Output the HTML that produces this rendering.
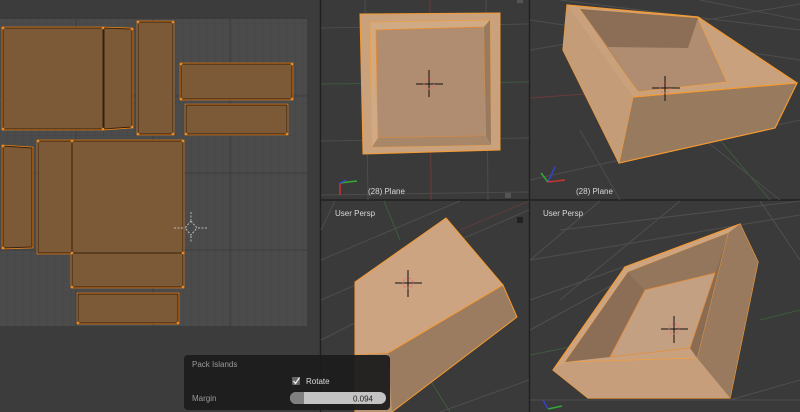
<!DOCTYPE html>
<html><head><style>
html,body{margin:0;padding:0;background:#3a3a3a;}
svg{display:block}
text{font-family:"Liberation Sans",sans-serif;}
</style></head><body>
<svg width="800" height="412" viewBox="0 0 800 412" xmlns="http://www.w3.org/2000/svg">
<defs>
<pattern id="g" width="8" height="8" patternUnits="userSpaceOnUse"><rect width="8" height="8" fill="#4b4b4b"/><path d="M8 0V8H0" fill="none" stroke="#434343" stroke-width="0.6"/></pattern>
<g id="isl">
<rect x="3" y="28" width="100" height="101"/>
<polygon points="104,28 132,29 132,127 104,129"/>
<rect x="138" y="22" width="35" height="112"/>
<rect x="181" y="64" width="111" height="35"/>
<polygon points="186,105 287,105 287,134 186,134"/>
<polygon points="3,146 32,148 32,247 3,248"/>
<rect x="38" y="141" width="34" height="112"/>
<rect x="72" y="141" width="111" height="112"/>
<rect x="72" y="253" width="111" height="34"/>
<rect x="78" y="294" width="100" height="29"/>
</g>
</defs>
<rect x="0" y="0" width="320" height="412" fill="#3c3c3c"/>
<rect x="0" y="19" width="307" height="307" fill="url(#g)"/>
<g stroke="#393939" stroke-width="0.8"><line x1="76" y1="19" x2="76" y2="326"/><line x1="153" y1="19" x2="153" y2="326"/><line x1="230" y1="19" x2="230" y2="326"/><line x1="0" y1="96" x2="307" y2="96"/><line x1="0" y1="173" x2="307" y2="173"/><line x1="0" y1="250" x2="307" y2="250"/></g>
<use href="#isl" fill="none" stroke="#e8851e" stroke-width="2.6"/>
<use href="#isl" fill="#7c5a38" stroke="#3a2008" stroke-width="1"/>
<g fill="#f08a20"><circle cx="3" cy="28" r="1.3"/><circle cx="103" cy="28" r="1.3"/><circle cx="3" cy="129" r="1.3"/><circle cx="103" cy="129" r="1.3"/><circle cx="132" cy="29" r="1.3"/><circle cx="132" cy="127" r="1.3"/><circle cx="138" cy="22" r="1.3"/><circle cx="173" cy="22" r="1.3"/><circle cx="138" cy="134" r="1.3"/><circle cx="173" cy="134" r="1.3"/><circle cx="181" cy="64" r="1.3"/><circle cx="292" cy="64" r="1.3"/><circle cx="181" cy="99" r="1.3"/><circle cx="292" cy="99" r="1.3"/><circle cx="186" cy="134" r="1.3"/><circle cx="287" cy="134" r="1.3"/><circle cx="3" cy="146" r="1.3"/><circle cx="3" cy="248" r="1.3"/><circle cx="38" cy="141" r="1.3"/><circle cx="72" cy="141" r="1.3"/><circle cx="183" cy="141" r="1.3"/><circle cx="183" cy="253" r="1.3"/><circle cx="72" cy="253" r="1.3"/><circle cx="183" cy="287" r="1.3"/><circle cx="72" cy="287" r="1.3"/><circle cx="78" cy="323" r="1.3"/><circle cx="178" cy="323" r="1.3"/></g>
<g stroke="#bbb" stroke-width="1" fill="none" stroke-dasharray="2,1.5"><path d="M191 221L197 228L191 235L185 228Z"/><line x1="174" y1="228" x2="184" y2="228"/><line x1="198" y1="228" x2="208" y2="228"/><line x1="191" y1="212" x2="191" y2="220"/><line x1="191" y1="236" x2="191" y2="243"/></g>
<rect x="321" y="0" width="479" height="412" fill="#3a3a3a"/>
<g stroke="#202020" stroke-width="1.5"><line x1="320.5" y1="0" x2="320.5" y2="412"/><line x1="529.5" y1="0" x2="529.5" y2="412"/><line x1="321" y1="200" x2="800" y2="200"/></g>
<g stroke="#4c4c4c" stroke-width="1"><line x1="365" y1="0" x2="368" y2="200"/><line x1="486" y1="0" x2="488" y2="200"/><line x1="321" y1="28" x2="529" y2="24"/><line x1="321" y1="141" x2="529" y2="138"/><line x1="321" y1="195" x2="529" y2="192"/></g>
<line x1="430" y1="0" x2="431" y2="200" stroke="#6a3a3a"/>
<line x1="321" y1="84" x2="529" y2="82" stroke="#3e5a3e"/>
<polygon points="360,14 500,13 500,150 363,154" fill="#c9a17c" stroke="#f59a30" stroke-width="1"/>
<polygon points="370,22 490,20 491,145 372,147" fill="#d0a985" stroke="#f0a040" stroke-width="0.7"/>
<polygon points="376,30 484,27 486,136 378,138" fill="#b08d70" stroke="#e88a30" stroke-width="0.8"/>
<polygon points="484,27 490,20 491,145 486,136" fill="#987a60"/>
<polygon points="378,138 486,136 491,145 372,147" fill="#a88668"/>
<g stroke="#4d4d4d" stroke-width="1"><line x1="530" y1="20" x2="800" y2="60"/><line x1="560" y1="0" x2="800" y2="30"/><line x1="700" y1="0" x2="800" y2="20"/><line x1="530" y1="180" x2="800" y2="120"/><line x1="780" y1="200" x2="680" y2="120"/><line x1="620" y1="200" x2="580" y2="130"/><line x1="530" y1="50" x2="800" y2="4"/></g>
<line x1="530" y1="98" x2="640" y2="90" stroke="#6a3a3a"/>
<line x1="720" y1="140" x2="770" y2="200" stroke="#3e5a3e"/>
<polygon points="567,5 698,17 797,83 775,128 619,163 563,50" fill="#c9a17c" stroke="#f59a30" stroke-width="1.2"/>
<polygon points="633,97 619,163 775,128 797,83" fill="#987a5e" stroke="#f59a30" stroke-width="1"/>
<polygon points="567,5 563,50 619,163 633,97" fill="#c49c78"/>
<polygon points="580,9 698,18 727,82 638,92" fill="#b08d70" stroke="#f0a040" stroke-width="0.8"/>
<polygon points="580,9 698,18 688,48 608,47" fill="#8c6e56"/>
<polygon points="580,9 608,47 638,92" fill="#a8876a"/>
<line x1="633" y1="97" x2="797" y2="83" stroke="#f59a30"/>
<g stroke="#4d4d4d" stroke-width="1"><line x1="321" y1="260" x2="460" y2="201"/><line x1="321" y1="300" x2="529" y2="210"/><line x1="321" y1="340" x2="420" y2="290"/><line x1="440" y1="412" x2="529" y2="380"/><line x1="335" y1="201" x2="321" y2="230"/></g>
<line x1="460" y1="230" x2="529" y2="201" stroke="#5e3a3a"/>
<line x1="384" y1="201" x2="400" y2="240" stroke="#3e5a3e"/>
<line x1="430" y1="380" x2="450" y2="412" stroke="#3e5a3e"/>
<polygon points="446,218 503,285 388,353 355,355 355,282" fill="#cca482" stroke="#f59a30" stroke-width="1"/>
<polygon points="503,285 517,317 392,412 355,412 355,355 388,353" fill="#9c7c60" stroke="#f59a30" stroke-width="1"/>
<polygon points="355,355 388,353 392,412 355,412" fill="#b89372"/>
<g stroke="#4f4f4f" stroke-width="1"><line x1="530" y1="260" x2="800" y2="215"/><line x1="530" y1="300" x2="700" y2="240"/><line x1="560" y1="230" x2="800" y2="201"/><line x1="530" y1="330" x2="640" y2="270"/><line x1="600" y1="201" x2="530" y2="260"/><line x1="680" y1="201" x2="560" y2="300"/><line x1="760" y1="201" x2="800" y2="260"/><line x1="800" y1="380" x2="730" y2="400"/><line x1="530" y1="400" x2="800" y2="400"/></g>
<line x1="530" y1="355" x2="580" y2="345" stroke="#3e5a3e"/>
<line x1="760" y1="320" x2="800" y2="310" stroke="#3e5a3e"/>
<polygon points="740,224 758,262 730,398 588,398 553,370 625,267" fill="#cca482" stroke="#f59a30" stroke-width="1.2"/>
<polygon points="740,224 758,262 730,398 697,358 728,233" fill="#9a7a5e"/>
<polygon points="553,370 565,362 697,358 730,398 588,398" fill="#c69e7c"/>
<polygon points="628,272 728,233 697,358 565,362" fill="#c9a17f" stroke="#f0a040" stroke-width="0.8"/>
<polygon points="628,272 645,290 610,357 565,362" fill="#8c6e56"/>
<polygon points="628,272 728,233 715,273 645,290" fill="#94765c"/>
<polygon points="728,233 697,358 690,348 715,273" fill="#8a6c54"/>
<polygon points="645,290 715,273 690,348 610,357" fill="#c4a083" stroke="#e88a30" stroke-width="0.7"/>
<g stroke="#111" stroke-width="1"><line x1="429" y1="70" x2="429" y2="97"/><line x1="416" y1="84" x2="443" y2="84"/><line x1="665" y1="76" x2="665" y2="101"/><line x1="652" y1="88" x2="680" y2="88"/><line x1="408" y1="270" x2="408" y2="297"/><line x1="395" y1="283" x2="422" y2="283"/><line x1="674" y1="316" x2="674" y2="343"/><line x1="661" y1="329" x2="688" y2="329"/></g>
<g fill="none" stroke="#e07070" stroke-width="1" stroke-dasharray="2,1.5"><circle cx="429" cy="84" r="5"/><circle cx="665" cy="88" r="5"/><circle cx="408" cy="283" r="5"/><circle cx="674" cy="329" r="5"/></g>
<g stroke-width="1.5"><line x1="340" y1="183" x2="357" y2="181" stroke="#3a3"/><line x1="340" y1="183" x2="340" y2="195" stroke="#c33"/><line x1="340" y1="183" x2="346" y2="180" stroke="#34c"/>
<line x1="548" y1="182" x2="555" y2="167" stroke="#34c"/><line x1="548" y1="182" x2="541" y2="173" stroke="#3a3"/><line x1="548" y1="182" x2="565" y2="180" stroke="#c33"/>
<line x1="548" y1="409" x2="562" y2="406" stroke="#3a3"/><line x1="548" y1="409" x2="543" y2="400" stroke="#34c"/></g>
<g font-size="8" fill="#d8d8d8"><text x="368" y="194">(28) Plane</text><text x="576" y="194">(28) Plane</text><text x="335" y="216">User Persp</text><text x="543" y="216">User Persp</text></g>
<rect x="505" y="193" width="6" height="5" fill="#555"/><rect x="517" y="217" width="6" height="6" fill="#222"/><rect x="517" y="0" width="6" height="3" fill="#555"/>
<rect x="184" y="355" width="206" height="55" rx="4" fill="#1c1c1c" fill-opacity="0.95"/>
<g font-size="8" fill="#9a9a9a"><text x="192" y="367">Pack Islands</text><text x="192" y="401">Margin</text></g>
<rect x="292" y="377" width="8" height="8" rx="1" fill="#666"/>
<path d="M293.5 381l2 2.5l4-6" stroke="#eee" stroke-width="1.3" fill="none"/>
<text x="306" y="384" font-size="8" fill="#ddd">Rotate</text>
<rect x="290" y="392" width="96" height="12" rx="6" fill="#c4c4c4"/>
<path d="M296 392h8v12h-8a6 6 0 0 1 0-12z" fill="#808080"/>
<text x="373" y="401.5" font-size="8" fill="#222" text-anchor="end">0.094</text>
</svg>
</body></html>
